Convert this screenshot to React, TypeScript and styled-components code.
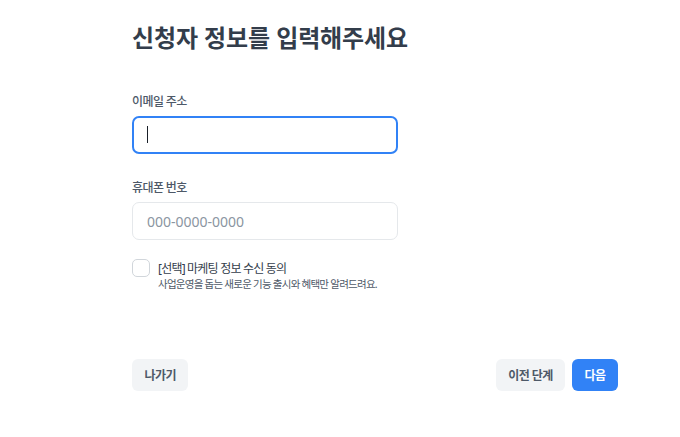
import React from "react";
import styled, { createGlobalStyle } from "styled-components";

const Global = createGlobalStyle`
  html, body { margin: 0; padding: 0; background: #ffffff; }
  body { font-family: "Noto Sans", "Noto Sans CJK KR", sans-serif; }
  * { box-sizing: border-box; }
`;

const Page = styled.div`
  width: 680px;
  height: 437px;
  padding: 22px 0 0 132px;
  display: flex;
  flex-direction: column;
`;

const Title = styled.h1`
  margin: 0;
  font-size: 24px;
  line-height: 32px;
  font-weight: 700;
  letter-spacing: -0.1px;
  color: #333d4b;
`;

const Form = styled.div`
  width: 266px;
  margin-top: 39px;
  display: flex;
  flex-direction: column;
  gap: 25px;
`;

const Field = styled.div`
  display: flex;
  flex-direction: column;
  gap: 5px;
`;

const Label = styled.label`
  font-size: 12px;
  line-height: 18px;
  font-weight: 500;
  letter-spacing: -0.6px;
  color: #4e5968;
`;

const InputWrap = styled.div`
  position: relative;
`;

const Input = styled.input<{ $active?: boolean }>`
  width: 100%;
  height: 38px;
  padding: 0 14px;
  border-radius: 7px;
  border: ${(p) => (p.$active ? "2px solid #3182f6" : "1px solid #e5e8eb")};
  padding-left: ${(p) => (p.$active ? "13px" : "14px")};
  outline: none;
  font-family: "Noto Sans", "Noto Sans CJK KR", sans-serif;
  font-size: 14px;
  color: #333d4b;
  background: #fff;
  caret-color: transparent;
  &::placeholder {
    color: #8b95a1;
  }
`;

const Caret = styled.span`
  position: absolute;
  left: 15px;
  top: 10px;
  width: 1px;
  height: 17px;
  background: #191f28;
`;

const Agree = styled.div`
  display: flex;
  gap: 8px;
  margin-top: -6px;
`;

const Box = styled.span`
  width: 18px;
  height: 18px;
  flex: none;
  border: 1px solid #d1d6db;
  border-radius: 5px;
  background: #fff;
`;

const AgreeText = styled.div`
  display: flex;
  flex-direction: column;
  padding-top: 1px;
`;

const AgreeTitle = styled.span`
  font-size: 12px;
  line-height: 17px;
  letter-spacing: -0.8px;
  color: #333d4b;
`;

const AgreeSub = styled.span`
  font-size: 10.5px;
  line-height: 15px;
  letter-spacing: -0.75px;
  color: #4e5968;
`;

const Footer = styled.div`
  width: 486px;
  margin-top: 67px;
  display: flex;
  justify-content: space-between;
  align-items: center;
`;

const Group = styled.div`
  display: flex;
  gap: 7px;
`;

const Button = styled.button<{ $primary?: boolean }>`
  height: 32px;
  padding: 0 12.5px;
  border: none;
  border-radius: 6px;
  font-family: "Noto Sans", "Noto Sans CJK KR", sans-serif;
  font-size: 12px;
  font-weight: 700;
  letter-spacing: -0.6px;
  background: ${(p) => (p.$primary ? "#3182f6" : "#f2f4f6")};
  color: ${(p) => (p.$primary ? "#ffffff" : "#4e5968")};
  cursor: pointer;
`;

export default function App() {
  return (
    <>
      <Global />
      <Page>
        <Title>신청자 정보를 입력해주세요</Title>
        <Form>
          <Field>
            <Label htmlFor="email">이메일 주소</Label>
            <InputWrap>
              <Input id="email" type="email" $active />
              <Caret />
            </InputWrap>
          </Field>
          <Field>
            <Label htmlFor="phone">휴대폰 번호</Label>
            <Input id="phone" type="tel" placeholder="000-0000-0000" />
          </Field>
          <Agree>
            <Box />
            <AgreeText>
              <AgreeTitle>[선택] 마케팅 정보 수신 동의</AgreeTitle>
              <AgreeSub>사업운영을 돕는 새로운 기능 출시와 혜택만 알려드려요.</AgreeSub>
            </AgreeText>
          </Agree>
        </Form>
        <Footer>
          <Button>나가기</Button>
          <Group>
            <Button>이전 단계</Button>
            <Button $primary>다음</Button>
          </Group>
        </Footer>
      </Page>
    </>
  );
}
